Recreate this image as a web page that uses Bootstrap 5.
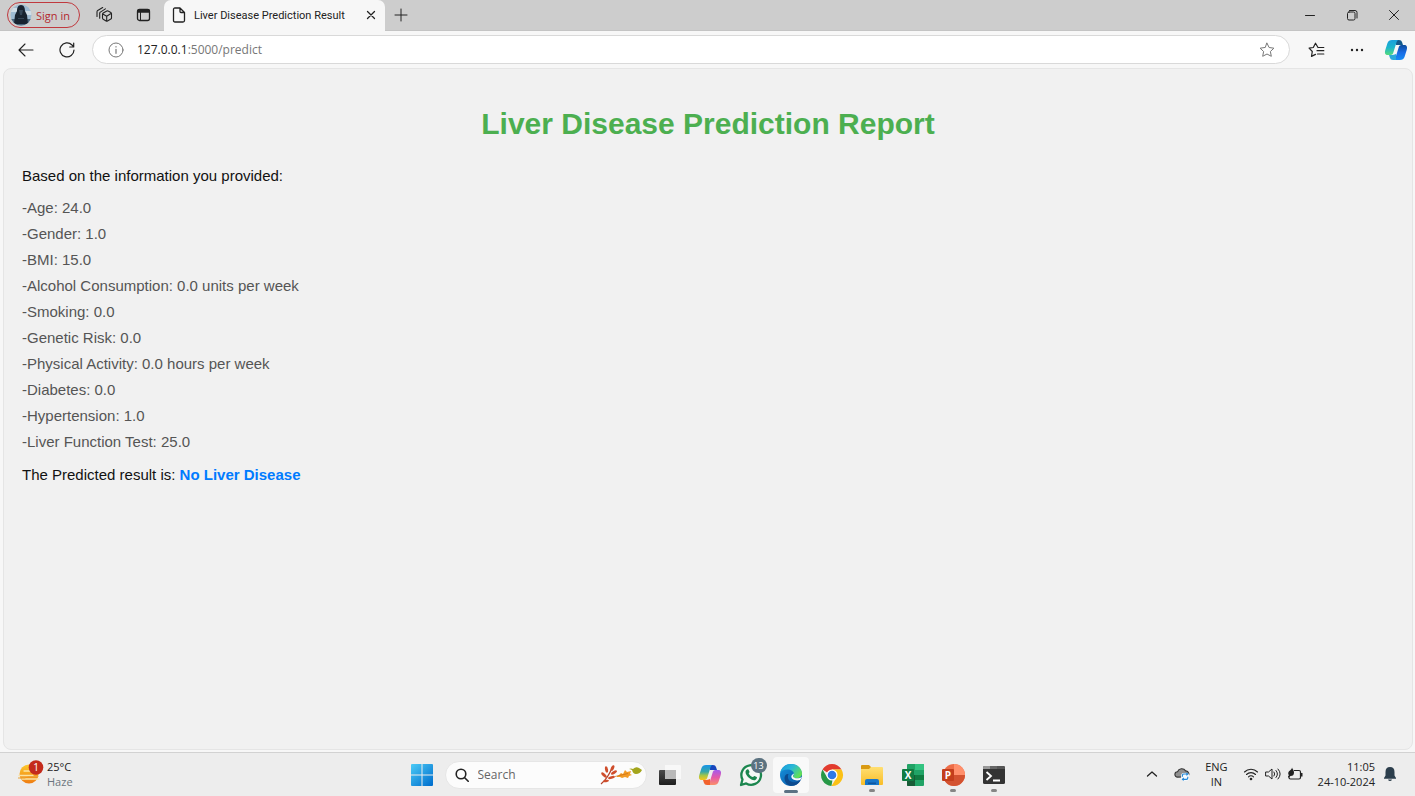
<!DOCTYPE html>
<html lang="en">
<head>
<meta charset="utf-8">
<meta name="viewport" content="width=device-width, initial-scale=1">
<title>Liver Disease Prediction Result</title>
<link href="https://cdn.jsdelivr.net/npm/bootstrap@5.3.0/dist/css/bootstrap.min.css" rel="stylesheet">
<style>
  body { font-family: "Open Sans", "Noto Sans", sans-serif; font-size: 11px; line-height: 15px; color: #222; background: #f7f7f7; }
  svg { display: block; flex: none; }
  button { border: 0; background: none; padding: 0; color: inherit; display: flex; align-items: center; justify-content: center; flex: none; }
  .ln { fill: none; stroke: currentColor; stroke-linecap: round; stroke-linejoin: round; }

  .tab-strip { height: 31px; background: #cdcdcd; border-bottom: 1px solid #c4c4c4; }
  .profile { height: 26px; width: 73px; margin: 0 8px 0 7px; border: 1px solid #c0393e; border-radius: 13px; color: #b3282e; gap: 4px; justify-content: flex-start; padding-left: 2px; }
  .strip-btn { width: 32px; height: 30px; }
  .active-tab { width: 221px; height: 31px; background: #f7f7f7; border-radius: 7px 7px 0 0; padding: 0 8px; margin-left: 4px; }
  .tab-title { margin-left: 8px; white-space: nowrap; font-family: Roboto, "Open Sans", sans-serif; }
  .win-btn { width: 42px; height: 31px; }

  .toolbar { height: 37px; padding-left: 5px; }
  .nav-btn { width: 41px; height: 30px; }
  .end-btn { width: 39px; height: 30px; }
  .address { height: 29px; border: 1px solid #d9d9d9; border-radius: 15px; background: #fff; margin: 0 6px 0 5px; padding: 0 14px 0 15px; font-size: 12px; color: #777; min-width: 0; }
  .address label { color: #222; margin-left: 13px; }
  .address input { border: 0; outline: 0; padding: 0; background: none; color: #777; min-width: 0; }

  .viewport { margin: 0 2px 2px 3px; border: 1px solid #e5e5e5; border-radius: 8px; background: #f1f1f1; padding: 0 18px; font-family: "Liberation Sans", Arial, sans-serif; font-size: 15px; line-height: 26px; color: #111; }
  .viewport h1 { font-size: 30px; line-height: 36px; font-weight: 700; color: #4caf50; margin: 37px 0 21px; }
  .facts { color: #555; margin: 6px 0 7px; }
  .outcome { color: #007bff; }

  .taskbar { height: 44px; background: #ededed; border-top: 1px solid #d2d2d2; display: grid; grid-template-columns: 1fr auto 1fr; align-items: center; }
  .weather { padding: 0 0 2px 18px; gap: 3px; text-align: left; justify-self: start; }
  .find { width: 202px; height: 28px; border-radius: 14px; background: #fcfcfc; border: 1px solid #e6e6e6; padding: 0 4px 0 9px; margin: 0 5px; }
  .find input { border: 0; outline: 0; padding: 0; background: none; font-size: 12px; color: #666; min-width: 0; margin-left: 9px; }
  .find input::placeholder { color: #666; opacity: 1; }
  .apps { width: 360px; }
  .app-btn { width: 36px; height: 36px; border-radius: 4px; position: relative; }
  .app-btn.current { background: #f9f9f9; }
  .app-btn.running::after, .app-btn.current::after { content: ""; position: absolute; bottom: 1px; left: 50%; margin-left: -3px; width: 6px; height: 3px; border-radius: 2px; background: #858585; }
  .app-btn.current::after { bottom: 0; width: 14px; margin-left: -7px; background: #5b7183; }
  .count { position: absolute; top: 1px; right: 2px; width: 16px; height: 15px; border-radius: 8px; background: #5b7280; color: #fff; font-size: 9px; line-height: 15px; }
  .tray { padding: 0 18px 2px 0; }
  .tray-btn { width: 22px; height: 30px; }
  .clock { margin-left: 12px; }
</style>
</head>
<body>
<div class="d-flex flex-column vh-100 overflow-hidden">

  <header>
    <div class="tab-strip d-flex align-items-center">
      <button class="profile" type="button">
        <svg width="22" height="22" viewBox="0 0 22 22"><defs><clipPath id="face"><circle cx="11" cy="11" r="10.5"/></clipPath></defs><g clip-path="url(#face)"><path fill="#9dbbd3" d="M0 0h22v22H0z"/><path fill="#cfdde7" d="M0 4h8v4H0zM15 7h7v4h-7z"/><path fill="#49667c" d="M0 15h22v7H0z"/><path fill="#182330" d="M11 1c-3 0-4 3-4 6l-2 4-1 9h14l-1-9-2-4c0-3-1-6-4-6z"/><path fill="#344657" d="M9 6h4l-1 5h-2zM8 14h6v1H8z"/></g></svg>
        <span>Sign in</span>
      </button>
      <button class="strip-btn" type="button" aria-label="Workspaces">
        <svg width="18" height="18" viewBox="0 0 18 18" class="ln" stroke-width="1.100"><path d="M7.500 8.300q0-.8.700-1.200l3.600-2q.7-.4 1.400 0l2.600 1.400q.7.400.7 1.200v4.200q0 .8-.7 1.200l-3.300 1.900q-.7.400-1.400 0l-2.900-1.800q-.7-.4-.7-1.200zM7.800 8l3.900 2.200 4.300-2.700M11.700 10.200v4.700M4.700 12.200V7.300q0-.8.700-1.200l5-3.200M2 10.500V5.700q0-.8.700-1.200l5-3"/></svg>
      </button>
      <button class="strip-btn ms-2" type="button" aria-label="Tab actions">
        <svg width="16" height="14" viewBox="0 0 16 14"><rect x="1.500" y="1.500" width="12" height="11" rx="2" fill="none" stroke="#222" stroke-width="1.300"/><path fill="#222" d="M1 4.800V3q0-2 2-2h9q2 0 2 2v1.800z"/><path d="M4.500 4v8.500" stroke="#222"/></svg>
      </button>
      <div class="active-tab d-flex align-items-center">
        <svg width="14" height="16" viewBox="0 0 14 16" class="ln" stroke-width="1.300"><path d="M3 1h5l4.500 4.500v8q0 1.500-1.500 1.500H3q-1.500 0-1.500-1.500v-11Q1.500 1 3 1zM8 1v3.500q0 1 1 1h3.500"/></svg>
        <span class="tab-title">Liver Disease Prediction Result</span>
        <button class="ms-auto" type="button" aria-label="Close tab"><svg width="12" height="12" viewBox="0 0 12 12" class="ln" stroke-width="1.300"><path d="m2.500 2.500 7 7m0-7-7 7"/></svg></button>
      </div>
      <button class="strip-btn" type="button" aria-label="New tab"><svg width="14" height="14" viewBox="0 0 14 14" class="ln"><path d="M7 1v12M1 7h12"/></svg></button>
      <div class="d-flex ms-auto">
        <button class="win-btn" type="button" aria-label="Minimize"><svg width="12" height="12" viewBox="0 0 12 12" class="ln"><path d="M1.500 6.500h9"/></svg></button>
        <button class="win-btn" type="button" aria-label="Restore"><svg width="12" height="12" viewBox="0 0 12 12" class="ln"><rect x="1.500" y="3" width="7.500" height="8" rx="1.500"/><path d="M3.500 1.500H9q2 0 2 2V9"/></svg></button>
        <button class="win-btn" type="button" aria-label="Close"><svg width="12" height="12" viewBox="0 0 12 12" class="ln"><path d="m1.500 1.500 9 9m0-9-9 9"/></svg></button>
      </div>
    </div>

    <div class="toolbar d-flex align-items-center">
      <button class="nav-btn" type="button" aria-label="Back"><svg width="16" height="16" viewBox="0 0 16 16" class="ln" stroke-width="1.100"><path d="M15 8H1m6-6L1 8l6 6"/></svg></button>
      <button class="nav-btn" type="button" aria-label="Refresh"><svg width="16" height="16" viewBox="0 0 16 16" class="ln" stroke-width="1.200"><path d="M15 8a7 7 0 1 1-2-5l1.500 1.500M14.700 1v4h-4"/></svg></button>
      <div class="address d-flex align-items-center flex-grow-1">
        <svg width="16" height="16" viewBox="0 0 16 16" class="ln"><circle cx="8" cy="8" r="7"/><path d="M8 7.300v4M8 4.700v.200" stroke-width="1.200"/></svg>
        <label for="url">127.0.0.1</label><input id="url" class="flex-grow-1" type="text" value=":5000/predict">
        <button type="button" aria-label="Add to favorites"><svg width="16" height="16" viewBox="0 0 16 16" class="ln"><path d="m8 1.200 2.100 4.300 4.800.700-3.500 3.300.900 4.800L8 12l-4.300 2.300.900-4.800L1.100 6.200l4.800-.700z"/></svg></button>
      </div>
      <button class="nav-btn" type="button" aria-label="Favorites"><svg width="17" height="16" viewBox="0 0 17 16" class="ln" stroke-width="1.200"><path d="M10 5.500 7.500 1.200 5.300 5.500l-4.200.700 3.200 3.300-.8 4.900 4-2M10 5.500h5.800M9 8.700h6.800M9.500 12h6.300"/></svg></button>
      <button class="end-btn" type="button" aria-label="Settings and more"><svg width="14" height="4" viewBox="0 0 14 4"><g fill="#222"><circle cx="2" cy="2" r="1.200"/><circle cx="7" cy="2" r="1.200"/><circle cx="12" cy="2" r="1.200"/></g></svg></button>
      <button class="end-btn" type="button" aria-label="Copilot">
        <svg width="24" height="22" viewBox="0 0 24 22"><defs><linearGradient id="cpa" x2="0" y2="1"><stop stop-color="#19a0dc"/><stop offset=".5" stop-color="#1cb5cc"/><stop offset="1" stop-color="#55db7c"/></linearGradient><linearGradient id="cpb" x2="0" y2="1"><stop stop-color="#0b4b9c"/><stop offset=".5" stop-color="#1a6be4"/><stop offset="1" stop-color="#168cf5"/></linearGradient></defs><path fill="#125a8c" d="M12 1h3q2.500 0 3 2l1 3h-7z"/><path fill="url(#cpa)" d="M8 1h7c-2 0-2.500 2-3 4l-2.500 8Q9 16 6.500 16H4c-3 0-3.500-2-2.700-5L3.500 4Q4.500 1 8 1z"/><path fill="url(#cpb)" d="M16 21H9c2 0 2.500-2 3-4l2.500-8Q15 6 17.500 6H20c3 0 3.500 2 2.700 5L20.500 18q-1 3-4.500 3z"/><path fill="#2aa9db" d="M12 21H9q-2.500 0-3-2l-1-3h3q1.800 0 4-1z"/></svg>
      </button>
    </div>
  </header>

  <main class="viewport flex-grow-1">
    <h1 class="text-center">Liver Disease Prediction Report</h1>
    <p class="m-0">Based on the information you provided:</p>
    <ul class="facts list-unstyled">
      <li>-Age: 24.0</li>
      <li>-Gender: 1.0</li>
      <li>-BMI: 15.0</li>
      <li>-Alcohol Consumption: 0.0 units per week</li>
      <li>-Smoking: 0.0</li>
      <li>-Genetic Risk: 0.0</li>
      <li>-Physical Activity: 0.0 hours per week</li>
      <li>-Diabetes: 0.0</li>
      <li>-Hypertension: 1.0</li>
      <li>-Liver Function Test: 25.0</li>
    </ul>
    <p class="m-0">The Predicted result is: <strong class="outcome">No Liver Disease</strong></p>
  </main>

  <footer class="taskbar">
    <button class="weather" type="button">
      <svg width="26" height="28" viewBox="0 2 26 28"><defs><linearGradient id="sun" x2="0" y2="1"><stop stop-color="#fdc92c"/><stop offset="1" stop-color="#ef7d13"/></linearGradient></defs><circle cx="11" cy="16" r="9.500" fill="url(#sun)"/><path d="M1 17.500h14M4 21h17M6 13h9M12 10h8" stroke="#fbe3a4" stroke-width="1.300" stroke-linecap="round"/><path d="M0 20h7M10 18.500h10" stroke="#e9a53b" stroke-linecap="round"/><circle cx="18" cy="9.500" r="7.300" fill="#c42b1c"/><text x="18" y="13" text-anchor="middle" font-size="10" fill="#fff">1</text></svg>
      <span>25°C<br><span class="text-secondary">Haze</span></span>
    </button>

    <div class="d-flex align-items-center">
      <button class="app-btn" type="button" aria-label="Start"><svg width="22" height="22" viewBox="0 0 22 22"><defs><linearGradient id="win" gradientUnits="userSpaceOnUse" x1="0" y1="0" x2="20" y2="22"><stop stop-color="#4ccbf6"/><stop offset="1" stop-color="#006fce"/></linearGradient></defs><path fill="url(#win)" d="M1 0h9.500v10.500H0V1q0-1 1-1zM11.500 0H21q1 0 1 1v9.500H11.500zM0 11.500h10.500V22H1q-1 0-1-1zM11.500 11.500H22V21q0 1-1 1h-9.500z"/></svg></button>
      <div class="find d-flex align-items-center">
        <svg width="14" height="14" viewBox="0 0 14 14" class="ln" stroke-width="1.600"><circle cx="6" cy="6" r="4.800"/><path d="m9.700 9.700 3.500 3.500"/></svg>
        <input class="flex-grow-1" type="text" placeholder="Search" aria-label="Search">
        <svg width="42" height="20" viewBox="0 0 42 20"><path d="M1 19Q8 13 12 3" stroke="#b5422a" stroke-width="1.200" fill="none"/><g fill="#cf4e2c"><ellipse cx="6.500" cy="4.500" rx="1.500" ry="3.200" transform="rotate(-10 6.500 4.500)"/><ellipse cx="12.500" cy="3" rx="1.500" ry="3" transform="rotate(25 12.500 3)"/><ellipse cx="4" cy="10" rx="1.500" ry="3.500" transform="rotate(-45 4 10)"/><ellipse cx="14" cy="7.500" rx="1.400" ry="3.300" transform="rotate(60 14 7.500)"/><ellipse cx="11.500" cy="12.500" rx="1.400" ry="3.500" transform="rotate(75 11.500 12.500)"/><ellipse cx="6" cy="16" rx="1.200" ry="3" transform="rotate(80 6 16)"/></g><path fill="#f29b25" d="m17 11 2-1 2-2 2 1 2-4 2 2 4-1-1 3 2 1-3 1-1 2-3-1-3 1-2-1-3 0z"/><path d="m15 11.500 13-3" stroke="#c76b16" stroke-width=".7"/><path fill="#a3a51c" d="M29 4q2-1 4 0 3-3 6-1l3 2q-2 4-6 4-3 0-4-4-2-1-3-1z"/></svg>
      </div>
      <div class="apps d-flex justify-content-between">
        <button class="app-btn" type="button" aria-label="Task view"><svg width="24" height="22" viewBox="0 0 24 22"><defs><linearGradient id="tv" x2="0" y2="1"><stop stop-color="#4a4a4a"/><stop offset="1" stop-color="#1d1d1d"/></linearGradient></defs><rect x="1" y="6" width="17" height="15" rx="1" fill="url(#tv)"/><path fill="#f8f8f8" fill-opacity=".9" d="M7 1h15q1 0 1 1v13H7z"/><path fill="#b9b9b9" d="M7 6h11v9H7z"/></svg></button>
        <button class="app-btn" type="button" aria-label="Copilot"><svg width="24" height="22" viewBox="0 0 24 22"><defs><linearGradient id="cpc" x2="0" y2="1"><stop stop-color="#1794e8"/><stop offset=".45" stop-color="#36a7a8"/><stop offset=".7" stop-color="#a4c647"/><stop offset="1" stop-color="#f7c51b"/></linearGradient><linearGradient id="cpd" x2="0" y2="1"><stop stop-color="#a45bee"/><stop offset=".5" stop-color="#e45aa8"/><stop offset="1" stop-color="#fb9068"/></linearGradient></defs><path fill="#1746bd" d="M12 1h3q2.500 0 3 2l1 3h-7z"/><path fill="url(#cpc)" d="M8 1h7c-2 0-2.500 2-3 4l-2.500 8Q9 16 6.500 16H4c-3 0-3.500-2-2.700-5L3.500 4Q4.500 1 8 1z"/><path fill="url(#cpd)" d="M16 21H9c2 0 2.500-2 3-4l2.500-8Q15 6 17.500 6H20c3 0 3.500 2 2.700 5L20.500 18q-1 3-4.500 3z"/><path fill="#f2622d" d="M12 21H9q-2.500 0-3-2l-1-3h3q1.800 0 4-1z"/></svg></button>
        <button class="app-btn" type="button" aria-label="WhatsApp"><svg width="24" height="24" viewBox="0 0 24 24"><path d="m2 22 1.500-5.500a9.800 9.800 0 1 1 3.700 3.900z" fill="#f5f8f5" stroke="#1b864e" stroke-width="2.300" stroke-linejoin="round"/><path fill="#1b864e" d="M8 6.500c.9-.6 1.500-.3 1.700.4l.8 1.800c.2.600-.9 1.500-.8 1.800 1 1.800 2.200 2.800 4 3.600.5.200 1.200-1.400 1.800-1.200l2.200 1.100c.8.400-.200 2.800-1.800 3.200-3.400.7-9.400-4.300-9.400-8.200 0-1.100.6-1.900 1.500-2.500z"/></svg><span class="count">13</span></button>
        <button class="app-btn current" type="button" aria-label="Edge"><svg width="24" height="24" viewBox="0 0 24 24"><defs><linearGradient id="eg" x2="1" y2=".6"><stop stop-color="#1797dc"/><stop offset=".5" stop-color="#29b8d8"/><stop offset="1" stop-color="#62df55"/></linearGradient><linearGradient id="eb" x2="1" y2="1"><stop stop-color="#1795df"/><stop offset="1" stop-color="#074f9f"/></linearGradient></defs><circle cx="12" cy="12" r="11" fill="url(#eb)"/><path fill="#0c4a8e" d="M9.500 11C7 17 13 22 21.500 17.500 17 25 6 25 5.500 15c.3-3 2-4.500 4-4z"/><path fill="url(#eg)" d="M1.200 10C2.500 4 7 1 12 1c7 0 11 5 11 9.500 0 5-7 6-8.800 3.500-.7-1 .8-1.200.8-3C15 8.500 12 6.500 8.500 6.500 5 6.500 2 8 1.200 10z"/><path fill="#f9f9f9" d="M14.900 10.500c.1 1.500-1.300 2-1 3 1.200 2.400 6.500 2.200 9 .2-.4 1.600-1.200 2.800-1.900 3.300-4.500 1.200-8.700-.5-8.700-3.500.1-1.700 1.600-2.200 2.600-3z"/></svg></button>
        <button class="app-btn" type="button" aria-label="Chrome"><svg width="24" height="24" viewBox="0 0 24 24"><path fill="#e23b2e" d="M2.500 6.500a11 11 0 0 1 19 0H12v6z"/><path fill="#279847" d="m2.500 6.500 5 8.500 5 1.500-1 6.500A11 11 0 0 1 2.500 6.500z"/><path fill="#fbc116" d="M12 6.500h9.500A11 11 0 0 1 11.500 23L17 14z"/><circle cx="12" cy="12" r="5.500" fill="#fff"/><circle cx="12" cy="12" r="4.300" fill="#2e78e6"/></svg></button>
        <button class="app-btn running" type="button" aria-label="File Explorer"><svg width="24" height="22" viewBox="0 0 24 22"><defs><linearGradient id="fo" x2="0" y2="1"><stop stop-color="#ffdf72"/><stop offset="1" stop-color="#f9bd27"/></linearGradient></defs><path fill="#d99a12" d="M2 1h7l2 2v5H1V2q0-1 1-1z"/><path fill="url(#fo)" d="M1 5h8l2-2h11q1 0 1 1v16q0 1-1 1H2q-1 0-1-1z"/><path fill="#1977c9" d="M7 15h10q2 0 2 2v4H5v-4q0-2 2-2z"/><path fill="#0f57a0" d="M8 18.500h8v1.500H8z"/></svg></button>
        <button class="app-btn" type="button" aria-label="Excel"><svg width="24" height="24" viewBox="0 0 24 24"><path fill="#21a366" d="M7 1h15q1 0 1 1v20q0 1-1 1H7q-1 0-1-1V2q0-1 1-1z"/><path fill="#33c481" d="M14 1h8q1 0 1 1v5h-9z"/><path fill="#107c41" d="M6 12h17v5H6z"/><path fill="#185c37" d="M6 12h8v11H7q-1 0-1-1z"/><rect x="1" y="6" width="12" height="12" rx="1" fill="#117c42"/><text x="7" y="15.500" text-anchor="middle" font-size="10" font-weight="700" fill="#fff">X</text></svg></button>
        <button class="app-btn running" type="button" aria-label="PowerPoint"><svg width="24" height="24" viewBox="0 0 24 24"><circle cx="13" cy="12" r="11" fill="#ed6c47"/><path fill="#ff8f6b" d="M13 1a11 11 0 0 1 11 11H13z"/><path fill="#d35230" d="M2 12h22a11 11 0 0 1-22 0z"/><rect x="1" y="6" width="12" height="12" rx="1" fill="#c43e1c"/><text x="7" y="15.500" text-anchor="middle" font-size="10" font-weight="700" fill="#fff">P</text></svg></button>
        <button class="app-btn running" type="button" aria-label="Command Prompt"><svg width="24" height="20" viewBox="0 0 24 20"><rect x="1" y="1" width="22" height="18" rx="1.500" fill="#333"/><path fill="#999" d="M1 4V2.500Q1 1 2.500 1H8v3z"/><path fill="#666" d="M8 1h7v3H8z"/><path fill="#555" d="M15 1h6.500Q23 1 23 2.500V4h-8z"/><path d="m4.500 7 4.500 4-4.500 4M11 15.500h7" stroke="#fff" stroke-width="1.800" fill="none"/></svg></button>
      </div>
    </div>

    <div class="tray d-flex align-items-center justify-content-end">
      <button class="tray-btn" type="button" aria-label="Hidden icons"><svg width="12" height="8" viewBox="0 0 12 8" class="ln" stroke-width="1.300"><path d="m1.500 6 4.500-4 4.500 4"/></svg></button>
      <button class="tray-btn ms-2" type="button" aria-label="OneDrive"><svg width="16" height="16" viewBox="0 0 18 16"><path d="M4 11.500a3 3 0 0 1 0-6 5 5 0 0 1 9-1 3.500 3.500 0 0 1 2 6.500z" fill="#909090" stroke="#333" stroke-width="1.200"/><rect x="8" y="7" width="9" height="8.500" rx="3" fill="#f5faff"/><path d="M9.500 11V9.500Q9.500 8 11 8h3.500M15.500 11v1.500q0 1.500-1.500 1.500h-3.500M14 6.800 15.500 8 14 9.500M11 12.500 9.500 14l1.500 1.200" stroke="#2589d8" stroke-width="1.300" fill="none"/></svg></button>
      <button class="ms-2 px-1" type="button"><span>ENG<br>IN</span></button>
      <button class="tray-btn ms-2" type="button" aria-label="Wi-Fi"><svg width="16" height="14" viewBox="0 0 16 14" class="ln" stroke-width="1.100"><path d="M1.500 5a9.200 9.200 0 0 1 13 0M3.500 7.500a6.400 6.400 0 0 1 9 0M5.500 9.800a3.500 3.500 0 0 1 5 0"/><circle cx="8" cy="12" r=".8" fill="currentColor"/></svg></button>
      <button class="tray-btn" type="button" aria-label="Volume"><svg width="16" height="14" viewBox="0 0 16 14" class="ln"><path d="M1 5h2.500L7 2v10L3.500 9H1zM9 5q1.500 2 0 4M11 3.500q3 3.500 0 7M13 2q4.500 5 0 10"/></svg></button>
      <button class="tray-btn" type="button" aria-label="Battery"><svg width="16" height="14" viewBox="0 0 16 14"><path d="M7 3.500h5q1.500 0 1.500 1.500v5.500q0 1.500-1.500 1.500H3.500Q2 12 2 10.500V9" fill="none" stroke="#222" stroke-width="1.200"/><path fill="#222" d="M14 6h1.500v3.500H14zM5 .5c.5 1.500 2 3 2 5Q7 9 3.500 9l-2 1.500L1 10l.8-1.700C.5 6 1.500 4.500 3 3.500 4.200 2.700 5 1.500 5 .5z"/></svg></button>
      <button class="clock text-end" type="button"><span>11:05<br>24-10-2024</span></button>
      <button class="ms-2" type="button" aria-label="Notifications"><svg width="14" height="16" viewBox="0 0 14 16"><path fill="#2c3e4c" d="M7 1q4.500 0 4.500 5v3.500L13 12v.7H1V12l1.500-2.500V6Q2.500 1 7 1zM5 13.500h4Q8.500 15 7 15t-2-1.500z"/></svg></button>
    </div>
  </footer>
</div>
<script src="https://cdn.jsdelivr.net/npm/bootstrap@5.3.0/dist/js/bootstrap.bundle.min.js"></script>
</body>
</html>
